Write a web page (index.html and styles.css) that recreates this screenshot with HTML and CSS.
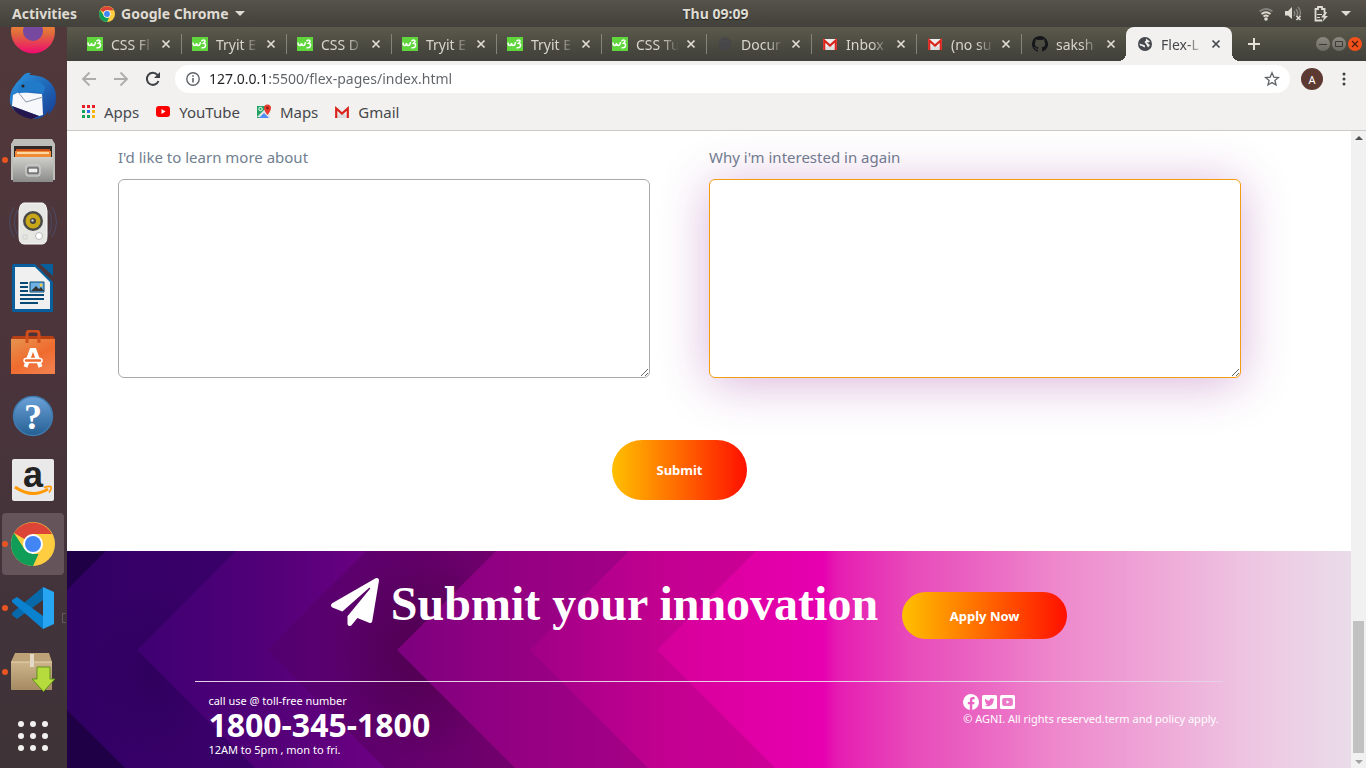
FILE: index.html
```html
<!DOCTYPE html>
<html lang="en">
<head>
<meta charset="utf-8">
<title>Flex-Layout</title>
<link rel="stylesheet" href="styles.css">
</head>
<body>
<svg class="defs" aria-hidden="true">
  <defs>
    <symbol id="w3" viewBox="0 0 16 14"><rect width="16" height="14" fill="#5fd63c"/><path d="M1 5.500q0 3 1.700 3t1.800-2.500q0 2.500 1.800 2.500T8.500 5M9.500 4.300q1.500-2 3-1t-1 3q2.500.2 2 2.600t-4 1.800" fill="none" stroke="#fff" stroke-width="1.500"/></symbol>
    <symbol id="gmail" viewBox="0 0 16 12"><path d="M1 1h14v11H1z" fill="#eee"/><path d="M1 12 8 5.500 15 12z" fill="#ddd"/><path d="M2.200 12V2.500L8 7.500l5.800-5V12" fill="none" stroke="#d9231b" stroke-width="2.200"/></symbol>
    <symbol id="x" viewBox="0 0 10 10"><path d="m1.500 1.500 7 7m0-7-7 7" stroke="currentColor" stroke-width="1.700"/></symbol>
    <symbol id="chrome" viewBox="0 0 44 44"><circle cx="22" cy="22" r="22" fill="#ffcd40"/><path d="M22 22 3 11a22 22 0 0 1 38 1H22z" fill="#db4437"/><path d="M22 44A22 22 0 0 1 3 11l10.400 16L22 32h5.500z" fill="#0f9d58"/><circle cx="22" cy="22" r="10" fill="#fff"/><circle cx="22" cy="22" r="8" fill="#4285f4"/></symbol>
  </defs>
</svg>

<header class="topbar">
  <div class="topbar-left">
    <button class="plain">Activities</button>
    <button class="plain app-menu"><svg width="16" height="16"><use href="#chrome"/></svg>Google Chrome<span class="caret"></span></button>
  </div>
  <time class="clock">Thu 09:09</time>
  <div class="topbar-right">
    <svg width="14" height="14" viewBox="0 0 14 14" fill="none" stroke-width="1.800"><path d="M.5 4.500q6.500-5 13 0" stroke="#85837e"/><path d="M2.500 7q4.500-3.500 9 0M4.500 9.500q2.500-2 5 0" stroke="#dfdbd2"/><circle cx="7" cy="12" r="1.800" fill="#dfdbd2"/></svg>
    <svg width="17" height="15" viewBox="0 0 17 15" fill="none"><path d="M0 5h3l4-4v12L3 9.500H0z" fill="#dfdbd2"/><path d="M9 5q1.500 2.500 0 5M11 3q3 4 .500 7M13 1q4 4 1.500 9" stroke="#85837e" stroke-width="1.500"/><path d="m11.500 10 4 4m0-4-4 4" stroke="#dfdbd2" stroke-width="1.700"/></svg>
    <svg width="15" height="16" viewBox="0 0 15 16" fill="none"><path d="M8 14.500H1.500V3H4V1h4v2h2.500v4" stroke="#dfdbd2" stroke-width="1.800"/><path d="M3 8h5v1H3zm0 3h3v1H3zM11 6 7 11.500h3L8 16l6-6h-3l2-4z" fill="#dfdbd2"/></svg>
    <span class="caret"></span>
  </div>
</header>

<div class="desktop">
  <nav class="dock" aria-label="Dock">
    <button class="dock-item" aria-label="Firefox"><svg width="46" height="46" viewBox="0 0 46 46"><defs><linearGradient id="ff" x2="0" y2="1"><stop stop-color="#ffb52e"/><stop offset=".55" stop-color="#e06a3c"/><stop offset="1" stop-color="#f00a70"/></linearGradient></defs><circle cx="23" cy="22.500" r="22" fill="url(#ff)"/><circle cx="23" cy="22" r="10" fill="#7648a0"/></svg></button>
    <button class="dock-item" aria-label="Thunderbird"><svg width="48" height="48" viewBox="0 0 48 48"><defs><linearGradient id="tb" x2="1" y2="1"><stop stop-color="#2c9ae4"/><stop offset="1" stop-color="#163a90"/></linearGradient></defs><path d="M12 6Q16 0 22 1l-2 2q20 0 26 15 4 16-7 25l1-5q-5 9-16 9l5-3Q6 46 1 31-1 18 12 6z" fill="url(#tb)"/><path d="M4 23 10 20 33 22l1 21-4 1L3 34z" fill="#f6f8fb"/><path d="m9 20 8 10 17-5" fill="none" stroke="#8c98a8"/><path d="M9 21Q10 8 22 9q9-1 14 6l-2 7Q24 18 19 20l-7 1z" fill="#217bc9"/><circle cx="14" cy="14" r="1.500" fill="#222"/><path d="m3 34 27 10-8 3Q7 44 3 34z" fill="#251650"/></svg></button>
    <button class="dock-item running" aria-label="Files"><svg width="44" height="44" viewBox="0 0 44 44"><defs><linearGradient id="fi" x2="0" y2="1"><stop stop-color="#cfcfcb"/><stop offset="1" stop-color="#8b8b89"/></linearGradient></defs><path d="M3 1h38l3 5v36H0V6z" fill="#bdbdb9"/><path d="M3 8h38v11H3z" fill="#2f2a28"/><path d="M5 11h34v8H5z" fill="#c8501c"/><path d="M4 13h36v6H4z" fill="#f08a34"/><path d="M6 14h32v2H6z" fill="#ffd7a0"/><path d="M2 19h40v25H2z" fill="url(#fi)"/><rect x="15" y="27" width="14" height="11" rx="2" fill="#aaa" stroke="#d8d8d8"/><path d="M17 30h10v5H17z" fill="#eee" stroke="#444"/></svg></button>
    <button class="dock-item" aria-label="Rhythmbox"><svg width="50" height="46" viewBox="0 0 50 46"><path d="M6 6q-9 15 0 30M9 9q-5 13 0 24M44 6q9 15 0 30M41 9q5 13 0 24" fill="none" stroke="#46547c" stroke-opacity=".7"/><path d="M16 2h18q4 0 5 8v25q0 8-5 8H16q-5 0-5-8V10q1-8 5-8z" fill="#e6e6e3" stroke="#fafafa"/><circle cx="25" cy="20" r="10" fill="#4a4a48"/><circle cx="25" cy="20" r="7.500" fill="#c8a818"/><circle cx="25" cy="20" r="3" fill="#444"/><circle cx="24.500" cy="19.500" r="1.200" fill="#ccc"/><circle cx="31" cy="35" r="3.500" fill="#fff" stroke="#bbb"/><path d="M15 34h4v4h-4z" fill="none" stroke="#d0d0ce"/></svg></button>
    <button class="dock-item" aria-label="LibreOffice Writer"><svg width="42" height="48" viewBox="0 0 42 48"><path d="M2 0h21l18 18v30H1q-1 0-1-2V2q0-2 2-2z" fill="#085f9c"/><path d="M28 0h13v12z" fill="#085f9c"/><path d="M3 3h20l15 15v27H3z" fill="#f0f0f0"/><path d="M8 18h8v2H8zm0 4h8v2H8zm0 4h8v2H8zm0 4h24v2H8zm0 4h24v2H8zm0 4h18v2H8z" fill="#064a75"/><path d="M18 18h14v10H18z" fill="#6db2e2" stroke="#064a75"/><path d="m19 27 5-5 3 3 2-2 3 4z" fill="#333"/><circle cx="29" cy="21" r="1.500" fill="#f5c93c"/></svg></button>
    <button class="dock-item" aria-label="Ubuntu Software"><svg width="44" height="44" viewBox="0 0 44 44"><defs><linearGradient id="bag" x2=".7" y2="1"><stop stop-color="#e79450"/><stop offset=".6" stop-color="#ef6b2e"/><stop offset="1" stop-color="#f27e4a"/></linearGradient></defs><path d="m2 6-2 3h44l-2-3z" fill="#b73f14"/><path d="M0 9h44v35H0z" fill="url(#bag)"/><path d="M16 13V4q0-3 3-3h6q3 0 3 3v9" fill="none" stroke="#d04e1c" stroke-width="3"/><path d="m14.500 37 6-17h3l6 17" fill="none" stroke="#fff" stroke-width="4"/><rect x="13" y="28.500" width="18" height="4" rx="2" fill="#ef6b2e" stroke="#fff" stroke-width="1.500"/></svg></button>
    <button class="dock-item" aria-label="Help"><svg width="42" height="42" viewBox="0 0 42 42"><defs><linearGradient id="hp" x2="0" y2="1"><stop stop-color="#6ca2d8"/><stop offset="1" stop-color="#245f93"/></linearGradient></defs><circle cx="21" cy="21" r="19.500" fill="url(#hp)" stroke="#3f79ae" stroke-width="1.500"/><text x="21" y="34" text-anchor="middle" class="glyph-help">?</text></svg></button>
    <button class="dock-item" aria-label="Amazon"><svg width="42" height="42" viewBox="0 0 42 42"><rect width="42" height="42" rx="2" fill="#e9e9e9"/><text x="21" y="28" text-anchor="middle" class="glyph-amazon">a</text><path d="M3 28q17 12 33 2" fill="none" stroke="#f90" stroke-width="3"/><path d="M32 28.500q6-2 7-.5t-2 5.500" fill="none" stroke="#f90" stroke-width="1.700"/></svg></button>
    <button class="dock-item running active" aria-label="Google Chrome"><svg width="44" height="44"><use href="#chrome"/></svg></button>
    <button class="dock-item running" aria-label="Visual Studio Code"><svg width="42" height="42" viewBox="0 0 42 42"><path d="M31 0v13L5 32l-5-4v-2z" fill="#0869aa"/><path d="M31 42V29L5 10l-5 3v2z" fill="#0b82cf"/><path d="m31 0 11 5v32l-11 5z" fill="#27a5f2"/></svg><span class="stray"></span></button>
    <button class="dock-item running" aria-label="Package installer"><svg width="46" height="40" viewBox="0 0 46 40"><defs><linearGradient id="bx" x2="0" y2="1"><stop stop-color="#cdb48a"/><stop offset="1" stop-color="#a58a62"/></linearGradient></defs><path d="M5 1h34l3 9H1z" fill="#bda177"/><path d="M1 10h41v28H1z" fill="url(#bx)"/><path d="M1 10h41" stroke="#e3d3b4"/><path d="M20 2h4v13h-4z" fill="#e4d9c6"/><path d="M27 15h13v12h5L33.500 39.500 22 27h5z" fill="#b5dc3c" stroke="#5f8f1c"/></svg></button>
    <button class="dock-item" aria-label="Show applications"><svg width="30" height="30" viewBox="0 0 30 30" fill="#f2f1f0"><circle cx="3" cy="3" r="3"/><circle cx="15" cy="3" r="3"/><circle cx="27" cy="3" r="3"/><circle cx="3" cy="15" r="3"/><circle cx="15" cy="15" r="3"/><circle cx="27" cy="15" r="3"/><circle cx="3" cy="27" r="3"/><circle cx="15" cy="27" r="3"/><circle cx="27" cy="27" r="3"/></svg></button>
  </nav>

  <div class="browser">
    <div class="tabstrip">
      <div class="tab"><svg class="fav" width="16" height="14"><use href="#w3"/></svg><span class="tab-title">CSS Fl</span><button class="close" aria-label="Close tab"><svg width="10" height="10"><use href="#x"/></svg></button></div>
      <div class="tab"><svg class="fav" width="16" height="14"><use href="#w3"/></svg><span class="tab-title">Tryit E</span><button class="close" aria-label="Close tab"><svg width="10" height="10"><use href="#x"/></svg></button></div>
      <div class="tab"><svg class="fav" width="16" height="14"><use href="#w3"/></svg><span class="tab-title">CSS D</span><button class="close" aria-label="Close tab"><svg width="10" height="10"><use href="#x"/></svg></button></div>
      <div class="tab"><svg class="fav" width="16" height="14"><use href="#w3"/></svg><span class="tab-title">Tryit E</span><button class="close" aria-label="Close tab"><svg width="10" height="10"><use href="#x"/></svg></button></div>
      <div class="tab"><svg class="fav" width="16" height="14"><use href="#w3"/></svg><span class="tab-title">Tryit E</span><button class="close" aria-label="Close tab"><svg width="10" height="10"><use href="#x"/></svg></button></div>
      <div class="tab"><svg class="fav" width="16" height="14"><use href="#w3"/></svg><span class="tab-title">CSS Tu</span><button class="close" aria-label="Close tab"><svg width="10" height="10"><use href="#x"/></svg></button></div>
      <div class="tab"><svg class="fav" width="16" height="16" viewBox="0 0 16 16"><circle cx="8" cy="8" r="6.500" fill="#47474a"/><path d="M4 6q4-3 8 1" stroke="#505050" fill="none"/></svg><span class="tab-title">Docur</span><button class="close" aria-label="Close tab"><svg width="10" height="10"><use href="#x"/></svg></button></div>
      <div class="tab"><svg class="fav" width="16" height="12"><use href="#gmail"/></svg><span class="tab-title">Inbox</span><button class="close" aria-label="Close tab"><svg width="10" height="10"><use href="#x"/></svg></button></div>
      <div class="tab"><svg class="fav" width="16" height="12"><use href="#gmail"/></svg><span class="tab-title">(no su</span><button class="close" aria-label="Close tab"><svg width="10" height="10"><use href="#x"/></svg></button></div>
      <div class="tab"><svg class="fav" width="16" height="16" viewBox="0 0 16 16"><path fill="#15171a" d="M8 0C3.580 0 0 3.580 0 8c0 3.540 2.290 6.530 5.470 7.590.4.070.55-.17.55-.38v-1.490c-2.010.37-2.530-.49-2.690-.94-.09-.23-.48-.94-.82-1.130-.28-.15-.68-.52-.01-.53.63-.01 1.080.58 1.230.82.72 1.210 1.870.87 2.330.66.07-.52.28-.87.51-1.070-1.780-.2-3.640-.89-3.640-3.950 0-.87.31-1.590.82-2.150-.08-.2-.36-1.020.08-2.120 0 0 .67-.21 2.200.82a7.600 7.600 0 0 1 4 0c1.530-1.040 2.200-.82 2.200-.82.44 1.100.16 1.920.08 2.120.51.56.82 1.270.82 2.150 0 3.070-1.870 3.750-3.650 3.950.29.25.54.73.54 1.480v2.200c0 .21.15.46.55.38A8 8 0 0 0 8 0z"/></svg><span class="tab-title">saksh</span><button class="close" aria-label="Close tab"><svg width="10" height="10"><use href="#x"/></svg></button></div>
      <div class="tab current"><svg class="fav" width="16" height="16" viewBox="0 0 16 16"><circle cx="8" cy="8" r="7" fill="#45484c"/><path d="M2.500 7.500 7 9q2 1 .5 2.500L5 10l-2-.5zM9 2.500l4 3-1.500 1-2-.5 2 2 1.500 1-2 2.500L9 8 7.500 6 9 4.500z" fill="#f2f1f0"/></svg><span class="tab-title">Flex-L</span><button class="close" aria-label="Close tab"><svg width="10" height="10"><use href="#x"/></svg></button></div>
      <button class="new-tab" aria-label="New tab"><svg width="12" height="12" viewBox="0 0 12 12"><path d="M6 0v12M0 6h12" stroke="#e4e2d8" stroke-width="2"/></svg></button>
      <div class="window-buttons">
        <button class="win" aria-label="Minimise"><svg width="14" height="14" viewBox="0 0 14 14"><path d="M3 7.500h8" stroke="#3c3b37"/></svg></button>
        <button class="win" aria-label="Maximise"><svg width="14" height="14" viewBox="0 0 14 14"><path d="M3.500 4.500h7v5h-7z" fill="none" stroke="#3c3b37"/></svg></button>
        <button class="win win-close" aria-label="Close"><svg width="14" height="14" viewBox="0 0 14 14"><path d="m4 4 6 6m0-6-6 6" stroke="#4a2010" stroke-width="1.300"/></svg></button>
      </div>
    </div>

    <div class="toolbar">
      <button class="tool" aria-label="Back"><svg width="16" height="16" viewBox="0 0 16 16"><path d="M15 8H2m6.500-6.500L2 8l6.500 6.500" fill="none" stroke="#adacaa" stroke-width="1.800"/></svg></button>
      <button class="tool" aria-label="Forward"><svg width="16" height="16" viewBox="0 0 16 16"><path d="M1 8h13M7.500 1.500 14 8l-6.500 6.500" fill="none" stroke="#adacaa" stroke-width="1.800"/></svg></button>
      <button class="tool" aria-label="Reload"><svg width="16" height="16" viewBox="0 0 16 16"><path d="M13.500 10A6 6 0 1 1 12.500 4" fill="none" stroke="#3e4144" stroke-width="2"/><path d="M15 1v6H9z" fill="#3e4144"/></svg></button>
      <div class="omnibox">
        <svg width="14" height="14" viewBox="0 0 14 14"><circle cx="7" cy="7" r="6.200" fill="none" stroke="#5f6368" stroke-width="1.400"/><path d="M7 6v4.500M7 3.300v1.500" stroke="#5f6368" stroke-width="1.600"/></svg>
        <input class="url" type="text" aria-label="Address" value="127.0.0.1:5500/flex-pages/index.html">
        <button class="plain star" aria-label="Bookmark"><svg width="16" height="16" viewBox="0 0 16 16"><path d="m8 1.800 1.800 4.300 4.600.4-3.500 3 1.100 4.500L8 11.600 4 14l1.100-4.500-3.500-3 4.600-.4z" fill="none" stroke="#5f6368" stroke-width="1.300"/></svg></button>
      </div>
      <button class="avatar">A</button>
      <button class="tool" aria-label="Menu"><svg width="4" height="14" viewBox="0 0 4 14" fill="#3e4144"><circle cx="2" cy="2" r="1.500"/><circle cx="2" cy="7" r="1.500"/><circle cx="2" cy="12" r="1.500"/></svg></button>
    </div>

    <div class="bookmarks">
      <a class="bookmark" href="#apps"><svg width="14" height="14" viewBox="0 0 14 14"><path d="M0 0h3v3H0zM5 0h3v3H5zM10 0h3v3h-3z" fill="#ea1c24"/><path d="M0 5h3v3H0zM0 10h3v3H0z" fill="#12a35a"/><path d="M5 5h3v3H5z" fill="#2f6fe8"/><path d="M5 10h3v3H5z" fill="#12a35a"/><path d="M10 5h3v3h-3zM10 10h3v3h-3z" fill="#fbb40a"/></svg>Apps</a>
      <a class="bookmark" href="#youtube"><svg width="16" height="14" viewBox="0 0 16 14"><rect x="1" y="1" width="14" height="11" rx="3" fill="#f00"/><path d="m6.500 4 4 2.500-4 2.500z" fill="#fff"/></svg>YouTube</a>
      <a class="bookmark" href="#maps"><svg width="16" height="16" viewBox="0 0 16 16"><path d="M1 2h11v12H1z" fill="#1fa463"/><path d="M1 13 9 5l5 6v3z" fill="#e4e5e8"/><path d="m3 14 5-5 5 5z" fill="#4d8df5"/><circle cx="4.500" cy="5" r="1.700" fill="none" stroke="#fff"/><path d="M8 4a3.500 3.500 0 0 1 7 0q0 2.500-3.500 7Q8 6.500 8 4z" fill="#e63b2e"/><circle cx="11.500" cy="4" r="1.300" fill="#8b1a12"/></svg>Maps</a>
      <a class="bookmark" href="#gmail-link"><svg width="16" height="12"><use href="#gmail"/></svg>Gmail</a>
    </div>

    <div class="viewport">
      <main class="page">
        <form class="form">
          <div class="fields">
            <div class="field"><label for="learn">I'd like to learn more about</label><textarea id="learn"></textarea></div>
            <div class="field"><label for="why">Why i'm interested in again</label><textarea id="why" class="focused"></textarea></div>
          </div>
          <button type="button" class="pill submit">Submit</button>
        </form>
        <footer class="footer">
          <svg class="footer-art" viewBox="0 0 1284 217" preserveAspectRatio="none" aria-hidden="true">
            <defs>
              <linearGradient id="g1" gradientUnits="userSpaceOnUse" x1="0" x2="200"><stop stop-color="#300062"/><stop offset=".35" stop-color="#360068"/><stop offset="1" stop-color="#3a0068"/></linearGradient>
              <linearGradient id="g2" gradientUnits="userSpaceOnUse" x1="70" x2="310"><stop stop-color="#3e0072"/><stop offset=".55" stop-color="#520078"/><stop offset="1" stop-color="#6c0082"/></linearGradient>
              <linearGradient id="g3" gradientUnits="userSpaceOnUse" x1="200" x2="440"><stop stop-color="#520070"/><stop offset=".5" stop-color="#60006c"/><stop offset="1" stop-color="#72006c"/></linearGradient>
              <linearGradient id="g4" gradientUnits="userSpaceOnUse" x1="330" x2="570"><stop stop-color="#7c007e"/><stop offset=".5" stop-color="#940082"/><stop offset="1" stop-color="#a40086"/></linearGradient>
              <linearGradient id="g5" gradientUnits="userSpaceOnUse" x1="463" x2="700"><stop stop-color="#a00086"/><stop offset=".55" stop-color="#c20090"/><stop offset="1" stop-color="#cc0096"/></linearGradient>
              <linearGradient id="g6" gradientUnits="userSpaceOnUse" x1="590" x2="1284"><stop stop-color="#d4009a"/><stop offset=".1" stop-color="#de00a2"/><stop offset=".24" stop-color="#e600b0"/><stop offset=".26" stop-color="#e61cb2"/><stop offset=".37" stop-color="#e84cba"/><stop offset=".46" stop-color="#ea64c2"/><stop offset=".57" stop-color="#ee86cc"/><stop offset=".73" stop-color="#eeaad8"/><stop offset=".87" stop-color="#edc8e2"/><stop offset="1" stop-color="#eadcea"/></linearGradient>
              <radialGradient id="shade"><stop stop-color="#40003c" stop-opacity=".6"/><stop offset="1" stop-color="#40003c" stop-opacity="0"/></radialGradient>
              <radialGradient id="shade2"><stop stop-color="#260050" stop-opacity=".45"/><stop offset="1" stop-color="#260050" stop-opacity="0"/></radialGradient>
            </defs>
            <path d="M0 0h1284v217H0z" fill="#1f0046"/>
            <path d="M39 0h1245v217H58L0 159V39z" fill="url(#g1)"/>
            <ellipse cx="85" cy="120" rx="60" ry="90" fill="url(#shade2)"/>
            <path d="M169 0h1115v217H188L70 99z" fill="url(#g2)"/>
            <path d="M299 0h985v217H318L200 99z" fill="url(#g3)"/>
            <ellipse cx="355" cy="100" rx="90" ry="110" fill="url(#shade)"/>
            <path d="M429 0h855v217H448L330 99z" fill="url(#g4)"/>
            <path d="M562 0h722v217H581L463 99z" fill="url(#g5)"/>
            <path d="M689 0h595v217H708L590 99z" fill="url(#g6)"/>
          </svg>
          <div class="cta">
            <svg class="plane" width="48" height="48" viewBox="0 0 512 512" fill="#fff"><path d="M476 3.200 12.500 270.600c-18.100 10.400-15.800 35.600 2.200 43.200L121 358.400l287.300-253.200c5.500-4.900 13.300 2.600 8.600 8.300L176 407v80.500c0 23.600 28.500 32.900 42.500 15.800L282 426l124.600 52.200c14.200 6 30.400-2.900 33-18.200l72-432C515 7.800 493.300-6.800 476 3.200z"/></svg>
            <h1 class="headline">Submit your innovation</h1>
            <button type="button" class="pill apply">Apply Now</button>
          </div>
          <div class="foot">
            <div class="contact">
              <p>call use @ toll-free number</p>
              <p class="phone">1800-345-1800</p>
              <p>12AM to 5pm , mon to fri.</p>
            </div>
            <div class="legal">
              <div class="social">
                <a href="#facebook" aria-label="Facebook"><svg width="16" height="16" viewBox="0 0 16 16"><path d="M16 8A8 8 0 1 0 6.800 15.900v-5.600h-2V8h2V6.200c0-2 1.200-3.100 3-3.100.9 0 1.800.2 1.800.2v2h-1c-1 0-1.300.6-1.300 1.200V8h2.200l-.4 2.300H9.300v5.600A8 8 0 0 0 16 8z" fill="#fff"/></svg></a>
                <a href="#twitter" aria-label="Twitter"><svg width="15" height="14" viewBox="0 0 14 14" preserveAspectRatio="none"><rect width="14" height="14" rx="1.500" fill="#fff"/><path d="M11.800 4.200q-.6.300-1.100.3.600-.4.800-1-.6.300-1.200.4a2 2 0 0 0-3.300 1.800Q4.500 5.500 2.900 3.700q-.9 1.700.6 2.600l-.9-.2q.1 1.600 1.600 2h-.9q.4 1.200 1.800 1.300-1.300 1-2.900.9 3.500 1.900 6.400-.3 2.300-2 2.200-4.800.6-.4 1-1z" fill="#ec6cc4"/></svg></a>
                <a href="#youtube-channel" aria-label="YouTube"><svg width="15" height="14" viewBox="0 0 14 14" preserveAspectRatio="none"><rect width="14" height="14" rx="1.500" fill="#fff"/><rect x="2" y="3" width="10" height="8" rx="2" fill="#ed78c8"/><path d="m6 5.300 3 1.700-3 1.700z" fill="#fff"/></svg></a>
              </div>
              <p>© AGNI. All rights reserved.term and policy apply.</p>
            </div>
          </div>
        </footer>
      </main>
      <div class="scrollbar" aria-hidden="true"><span class="arrow up"></span><span class="thumb"></span><span class="arrow down"></span></div>
    </div>
  </div>
</div>
</body>
</html>
```
FILE: styles.css
```css
* { box-sizing: border-box; }
body { margin: 0; height: 100vh; display: flex; flex-direction: column; overflow: hidden; font-family: "Noto Sans", "Open Sans", sans-serif; background: #fff; }
button { font: inherit; color: inherit; border: 0; padding: 0; background: none; }
p, h1 { margin: 0; }
svg { display: block; flex: none; }
.defs { position: absolute; width: 0; height: 0; }

/* System bar */
.topbar { flex: none; height: 27px; padding: 0 15px 0 12px; display: grid; grid-template-columns: 1fr auto 1fr; align-items: center; background: linear-gradient(#57534b, #41403a); color: #dfdbd2; font-weight: 700; font-size: 14px; line-height: 20px; text-shadow: 0 1px 1px #222; }
.topbar-left { display: flex; gap: 22px; }
.topbar-right { display: flex; align-items: center; justify-content: flex-end; gap: 12px; }
.app-menu { display: flex; align-items: center; gap: 6px; white-space: nowrap; }
.clock { padding-left: 68px; }
.caret { border: 5px solid transparent; border-top-color: #dfdbd2; border-bottom-width: 0; }

.desktop { flex: 1; min-height: 0; display: flex; }

/* Dock */
.dock { flex: none; width: 67px; display: flex; flex-direction: column; justify-content: flex-end; overflow: hidden; background: linear-gradient(#51383a, #4a343b 50%, #40333a 85%, #3e3336); }
.dock-item { position: relative; flex: none; height: 64px; margin-right: 1px; display: grid; place-items: center; }
.dock-item.active { height: 62px; margin: 1px 3px 1px 2px; border-radius: 4px; background: #65555b; }
.running::before { content: ""; position: absolute; left: 2px; width: 6px; height: 6px; border-radius: 50%; background: #e95420; }
.running.active::before { left: 0; }
.stray { position: absolute; right: 0; bottom: 17px; width: 4px; height: 10px; border: 1px solid #62585a; border-right: 0; }
.glyph-help { font: 700 36px "Liberation Serif", serif; fill: #fff; }
.glyph-amazon { font: 700 36px "Liberation Sans", sans-serif; fill: #222; }

/* Tabs */
.browser { flex: 1; min-width: 0; display: flex; flex-direction: column; }
.tabstrip { flex: none; height: 34px; padding: 0 4px 0 10px; display: flex; align-items: center; background: linear-gradient(#5a594b, #403f39); color: #d8d6cc; }
.tab { flex: 0 1 105px; min-width: 0; height: 20px; padding: 0 10px; display: flex; align-items: center; border-right: 1px solid #85847a; font-size: 14px; }
.tab:nth-last-child(4) { border-color: transparent; }
.fav { margin-right: 8px; }
.tab-title { flex: 1; min-width: 0; overflow: hidden; white-space: nowrap; -webkit-mask-image: linear-gradient(90deg, #000 60%, transparent); mask-image: linear-gradient(90deg, #000 60%, transparent); }
.close { margin-left: 7px; color: #e0ded5; }
.tab.current { position: relative; flex-basis: 106px; margin-left: -1px; padding: 0 11px; align-self: stretch; height: auto; border: 0; border-radius: 8px 8px 0 0; background: #f2f1f0; color: #45484c; }
.tab.current::before, .tab.current::after { content: ""; position: absolute; bottom: 0; width: 8px; height: 8px; }
.tab.current::before { left: -8px; background: radial-gradient(circle at 0 0, transparent 8px, #f2f1f0 8px); }
.tab.current::after { right: -8px; background: radial-gradient(circle at 100% 0, transparent 8px, #f2f1f0 8px); }
.current .close { color: #45484c; }
.new-tab { margin-left: 16px; }
.window-buttons { margin-left: auto; display: flex; gap: 2px; }
.win { border-radius: 50%; background: linear-gradient(#8c8a80, #6b6a62); }
.win-close { background: #f4511a; }

/* Toolbar and bookmarks */
.toolbar { flex: none; height: 36px; padding: 0 20px 0 14px; display: flex; align-items: center; gap: 16px; background: #f2f1f0; }
.omnibox { flex: 1; height: 28px; margin-left: -2px; padding: 0 10px 0 11px; display: flex; align-items: center; gap: 9px; border-radius: 14px; background: #fff; }
.url { flex: 1; min-width: 0; border: 0; padding: 0; font: 14px/20px "Noto Sans", sans-serif; color: transparent; background: linear-gradient(90deg, #202124 60px, #5f6368 60px); -webkit-background-clip: text; background-clip: text; }
.avatar { width: 22px; height: 22px; margin: 0 3px 0 -5px; border-radius: 50%; background: #5d3a31; color: #fff; font-size: 11px; }
.bookmarks { flex: none; height: 34px; padding: 0 15px 4px; display: flex; align-items: center; gap: 16px; border-bottom: 1px solid #cbcac9; background: #f2f1f0; }
.bookmark { display: flex; align-items: center; gap: 8px; color: #45484c; font-size: 15px; line-height: 20px; text-decoration: none; }

/* Page */
.viewport { flex: 1; min-height: 0; display: flex; }
.page { flex: 1; min-width: 0; display: flex; flex-direction: column; overflow: hidden; }
.form { padding: 15px 110px 51px 51px; display: flex; flex-direction: column; align-items: center; gap: 62px; }
.fields { width: 100%; display: grid; grid-template-columns: 1fr 1fr; gap: 59px; }
.field { display: flex; flex-direction: column; gap: 10px; }
.field label { color: #708090; font-size: 15px; line-height: 23px; }
.field textarea { height: 199px; border: 1px solid #a9a9a9; border-radius: 6px; background: #fff; }
.field .focused { border-color: #f39c12; box-shadow: 0 5px 50px rgba(128, 0, 128, .3); }
.pill { color: #fff; font-weight: 700; font-size: 13px; background: linear-gradient(90deg, #ffc000, #ff1000); }
.submit { width: 135px; height: 60px; border-radius: 30px; }

/* Footer */
.footer { position: relative; flex: 1; color: #fff; }
.footer-art { position: absolute; inset: 0; width: 100%; height: 100%; }
.cta { position: relative; padding: 26px 20px 42px 0; display: flex; justify-content: center; align-items: flex-start; }
.plane { margin-top: 1px; }
.headline { margin: 0 24px 0 12px; font: 700 48px/54px "Liberation Serif", serif; }
.apply { width: 165px; height: 47px; margin-top: 15px; border-radius: 24px; }
.foot { position: relative; margin: 0 10%; padding: 11px 4px 0 13px; display: flex; justify-content: space-between; border-top: 1px solid #e6d0e6; font-size: 11px; line-height: 15px; }
.phone { font-size: 32px; font-weight: 700; line-height: 34px; }
.social { display: flex; align-items: center; gap: 3px; height: 18px; }

/* Scrollbar */
.scrollbar { flex: none; width: 15px; padding: 5px 0 4px; display: flex; flex-direction: column; align-items: center; background: #f1f1f1; }
.arrow { border: 4px solid transparent; }
.up { border-bottom-color: #505050; border-top: 0; }
.down { border-top-color: #a3a3a3; border-bottom: 0; }
.thumb { width: 11px; height: 132px; margin: auto 0 7px; background: #c1c1c1; }
```
